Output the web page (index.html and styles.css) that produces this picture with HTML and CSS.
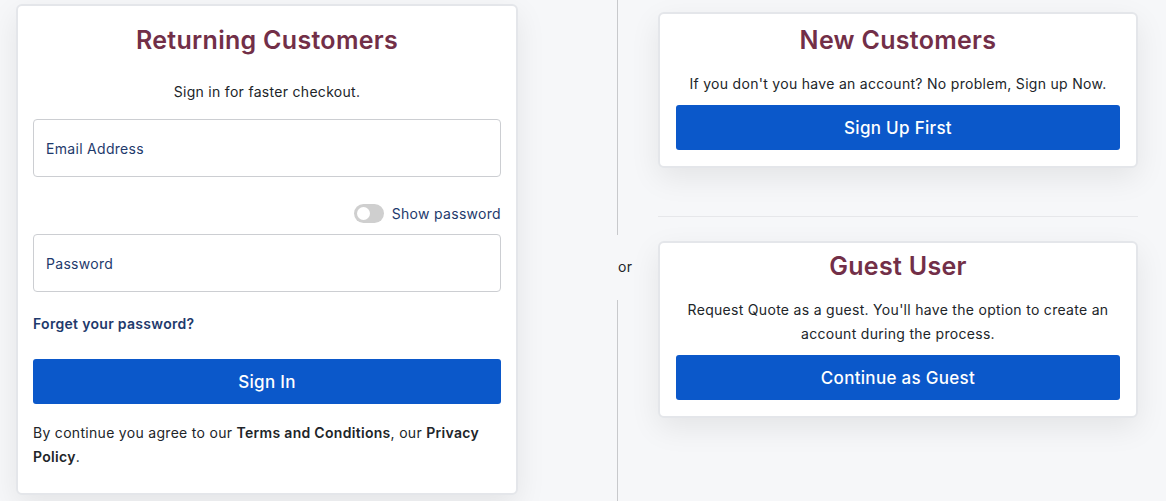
FILE: index.html
```html
<!DOCTYPE html>
<html lang="en">
<head>
  <meta charset="UTF-8" />
  <meta name="viewport" content="width=device-width, initial-scale=1.0" />
  <title>Sign In</title>
  <link rel="stylesheet" href="styles.css">
</head>
<body>
  <div class="page">
    <!-- Returning customers -->
    <div class="card login-card">
      <h2>Returning Customers</h2>
      <p class="intro">Sign in for faster checkout.</p>
      <div class="field">Email Address</div>
      <div class="show-pass">
        <span class="toggle"><span class="knob"></span></span>
        <span>Show password</span>
      </div>
      <div class="field">Password</div>
      <a class="forgot" href="#">Forget your password?</a>
      <button class="btn">Sign In</button>
      <p class="terms">By continue you agree to our <b>Terms and Conditions</b>, our <b>Privacy Policy</b>.</p>
    </div>

    <!-- Divider -->
    <div class="divider">
      <div class="line"></div>
      <div class="or">or</div>
      <div class="line"></div>
    </div>

    <!-- New / guest -->
    <div class="side">
      <div class="card">
        <h2>New Customers</h2>
        <p class="note">If you don't you have an account? No problem, Sign up Now.</p>
        <button class="btn">Sign Up First</button>
      </div>
      <hr class="sep">
      <div class="card guest-card">
        <h2>Guest User</h2>
        <p class="note">Request Quote as a guest. You'll have the option to create an account during the process.</p>
        <button class="btn">Continue as Guest</button>
      </div>
    </div>
  </div>
</body>
</html>
```

FILE: styles.css
```css
* {
  box-sizing: border-box;
  font-family: Inter, "Open Sans", sans-serif;
}
body {
  margin: 0;
  background-color: #f6f7f9;
  color: #212529;
  font-size: 14px;
  letter-spacing: 0.3px;
}
.page {
  display: flex;
  align-items: stretch;
  padding: 4px 28px 0 16px;
  height: 501px;
  overflow: hidden;
}
.card {
  background: white;
  border: 2px solid #e4e6ea;
  border-radius: 6px;
  box-shadow: 0 10px 30px rgba(0,0,0,0.08);
  padding: 10px 16px 16px;
  text-align: center;
}
.card h2 {
  margin: 0;
  color: #722f48;
  font-size: 25px;
  font-weight: 600;
  line-height: 32px;
  letter-spacing: 0.3px;
}
.login-card {
  width: 502px;
  height: 491px;
  text-align: left;
  padding: 18px 15px 16px;
}
.login-card h2 {
  text-align: center;
}
.intro {
  text-align: center;
  margin: 24px 0 15px;
  line-height: 24px;
}
.field {
  height: 58px;
  border: 1px solid #ccced2;
  border-radius: 4px;
  padding: 0 12px;
  display: flex;
  align-items: center;
  color: #1e3a6c;
}
.show-pass {
  display: flex;
  justify-content: flex-end;
  align-items: center;
  gap: 8px;
  color: #1e3a6c;
  margin: 25px 0 10px;
  height: 22px;
}
.toggle {
  width: 30px;
  height: 19px;
  border-radius: 10px;
  background: #cfcfcf;
  position: relative;
}
.knob {
  position: absolute;
  left: 3px;
  top: 3px;
  width: 13px;
  height: 13px;
  border-radius: 50%;
  background: white;
}
.forgot {
  display: block;
  margin: 23px 0 26px;
  color: #1e3a6c;
  font-weight: 600;
  text-decoration: none;
  line-height: 18px;
}
.btn {
  display: block;
  width: 100%;
  height: 45px;
  border: none;
  border-radius: 3px;
  background-color: #0b58ca;
  color: white;
  font-size: 17px;
  font-weight: 500;
  letter-spacing: 0.3px;
  cursor: pointer;
}
.terms {
  margin: 17px 0 0;
  line-height: 24px;
}
.terms b {
  font-weight: 600;
}
.divider {
  width: 140px;
  display: flex;
  flex-direction: column;
  align-items: flex-start;
  padding-left: 99px;
  margin-top: -4px;
}
.line {
  flex: 1;
  border-left: 1px solid #c8c9cc;
}
.or {
  padding: 20px 0 21px 1px;
  line-height: 24px;
}
.line:first-child {
  flex: 0 0 235px;
}
.side {
  width: 480px;
  padding-top: 8px;
}
.note {
  margin: 16px 0 9px;
  line-height: 24px;
}
.sep {
  border: none;
  border-top: 1px solid #e6e7ea;
  margin: 48px 0 24px;
}
.guest-card {
  padding-top: 7px;
}
.guest-card .note {
  margin: 16px 0 9px;
}
```
